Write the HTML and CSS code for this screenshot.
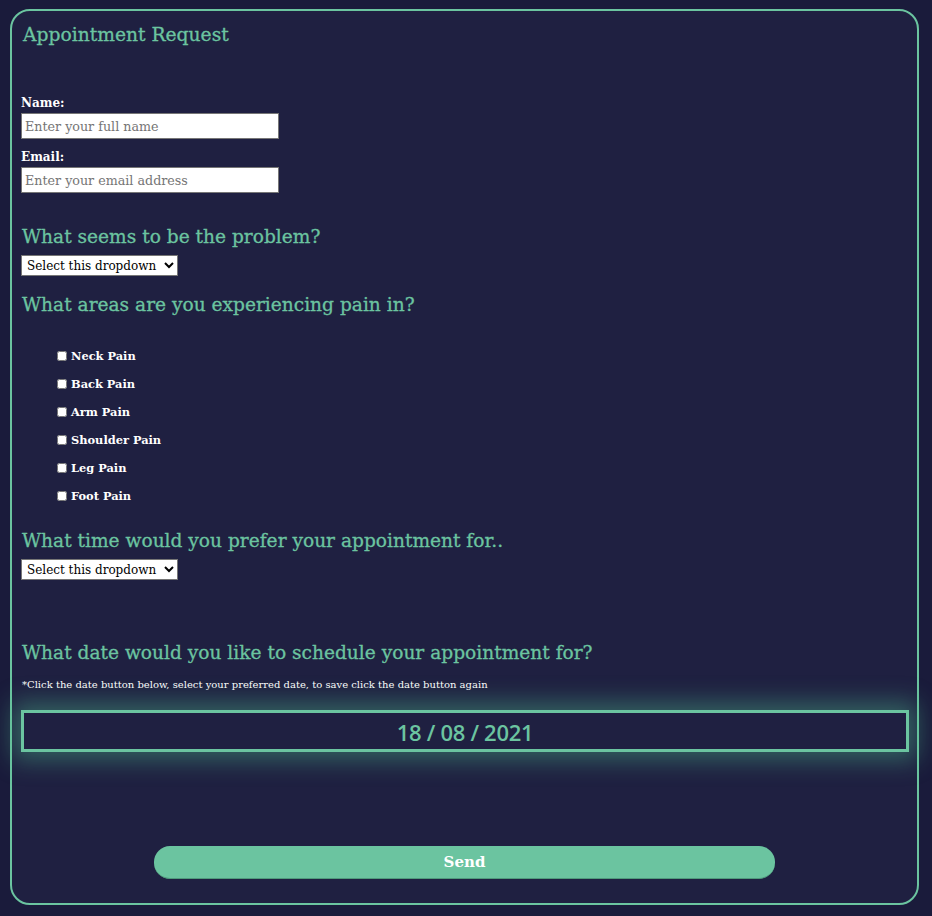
FILE: index.html
```html
<!DOCTYPE html>
<html lang="en">
<head>
<meta charset="utf-8">
<title>Appointment Request</title>
<link rel="stylesheet" href="styles.css">
</head>
<body>
<form class="card">
  <h1 class="title">Appointment Request</h1>
  <div class="field field-name">
    <label class="label" for="name">Name:</label>
    <input class="text-input" id="name" type="text" placeholder="Enter your full name">
  </div>
  <div class="field field-email">
    <label class="label" for="email">Email:</label>
    <input class="text-input" id="email" type="text" placeholder="Enter your email address">
  </div>
  <h2 class="question q-problem">What seems to be the problem?</h2>
  <select class="dropdown"><option>Select this dropdown</option></select>
  <h2 class="question q-areas">What areas are you experiencing pain in?</h2>
  <ul class="checks">
    <li class="check"><input type="checkbox" class="box"><span>Neck Pain</span></li>
    <li class="check"><input type="checkbox" class="box"><span>Back Pain</span></li>
    <li class="check"><input type="checkbox" class="box"><span>Arm Pain</span></li>
    <li class="check"><input type="checkbox" class="box"><span>Shoulder Pain</span></li>
    <li class="check"><input type="checkbox" class="box"><span>Leg Pain</span></li>
    <li class="check"><input type="checkbox" class="box"><span>Foot Pain</span></li>
  </ul>
  <h2 class="question q-time">What time would you prefer your appointment for..</h2>
  <select class="dropdown"><option>Select this dropdown</option></select>
  <h2 class="question q-date">What date would you like to schedule your appointment for?</h2>
  <p class="note">*Click the date button below, select your preferred date, to save click the date button again</p>
  <button type="button" class="date-btn">18 / 08 / 2021</button>
  <div class="send-row">
    <button type="submit" class="send">Send</button>
  </div>
</form>
</body>
</html>
```
FILE: styles.css
```css
html, body {
  margin: 0;
  padding: 0;
  background: #1a1b3b;
}
body {
  padding: 9px 13px 0 10px;
  font-family: "DejaVu Serif", serif;
}
.card {
  box-sizing: border-box;
  height: 896px;
  border: 2px solid #6bc4a0;
  border-radius: 20px;
  background: #1f2041;
  padding: 0 9px;
  display: flex;
  flex-direction: column;
  align-items: flex-start;
}
.title {
  margin: 11px 0 0 2px;
  font-size: 18.7px;
  line-height: 26px;
  font-weight: normal;
  color: #6bc4a0;
  -webkit-text-stroke: 0.3px #6bc4a0;
}
.field {
  display: flex;
  flex-direction: column;
  align-items: flex-start;
}
.field-name { margin-top: 47px; }
.field-email { margin-top: 10px; }
.label {
  font-size: 12px;
  line-height: 16px;
  font-weight: bold;
  color: #ffffff;
  margin-bottom: 2px;
}
.text-input {
  box-sizing: border-box;
  width: 258px;
  height: 26px;
  margin: 0;
  padding: 0 3px;
  border: 1px solid #767676;
  background: #ffffff;
  font-family: "DejaVu Serif", serif;
  font-size: 12.7px;
  color: #000;
}
.text-input::placeholder { color: #757575; }
.question {
  margin: 0 0 0 1px;
  font-size: 18.6px;
  line-height: 26px;
  font-weight: normal;
  color: #6bc4a0;
  -webkit-text-stroke: 0.3px #6bc4a0;
}
.q-problem { margin-top: 31px; }
.q-areas { margin-top: 16px; }
.q-time { margin-top: 18px; }
.q-date { margin-top: 60px; }
.dropdown {
  box-sizing: border-box;
  height: 21px;
  width: 157px;
  margin: 5px 0 0 0;
  padding: 0 0 0 1px;
  border: 1px solid #767676;
  border-radius: 0;
  background: #fff;
  font-family: "DejaVu Serif", serif;
  font-size: 12px;
  color: #000;
}
.checks {
  list-style: none;
  margin: 24px 0 0 0;
  padding: 0 0 0 36px;
}
.check {
  display: flex;
  align-items: center;
  height: 28px;
  font-size: 11.4px;
  font-weight: bold;
  color: #fff;
}
.box {
  width: 10px;
  height: 10px;
  margin: 0 4px 0 0;
}
.note {
  margin: 12px 0 0 1px;
  font-size: 10px;
  line-height: 14px;
  color: #ffffff;
}
.date-btn {
  box-sizing: border-box;
  align-self: stretch;
  width: auto;
  height: 42px;
  margin: 18px -1px 0 0;
  border: 3px solid #6bc4a0;
  background: #1f2041;
  color: #6bc4a0;
  font-family: "Open Sans", sans-serif;
  font-weight: 600;
  font-size: 22px;
  letter-spacing: -0.3px;
  box-shadow: 0 0 24px 8px rgba(78, 190, 140, 0.42);
  padding: 2px 0 0 0;
}
.send-row {
  align-self: stretch;
  display: flex;
  justify-content: center;
  margin-top: 94px;
}
.send {
  box-sizing: border-box;
  width: 621px;
  height: 33px;
  border: none;
  border-bottom: 1px solid #4f9a7c;
  border-radius: 16px;
  background: #6bc4a0;
  color: #fff;
  font-family: "DejaVu Serif", serif;
  font-weight: bold;
  font-size: 15px;
}
```
